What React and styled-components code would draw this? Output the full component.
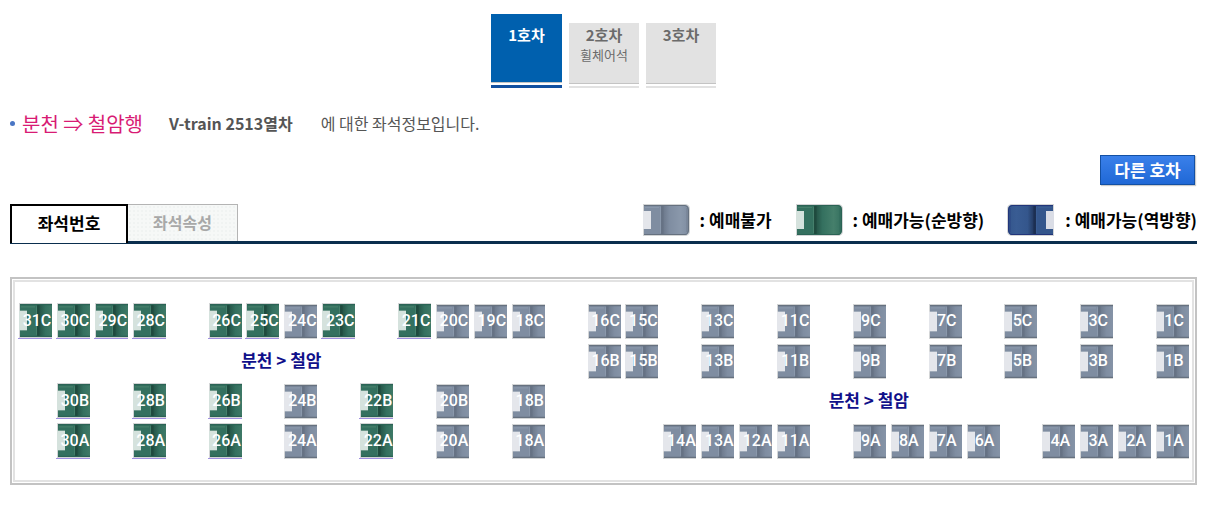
import React, { useState } from 'react';
import styled, { createGlobalStyle } from 'styled-components';

const cars = [
  { id: 1, name: '1호차' },
  { id: 2, name: '2호차', note: '휠체어석' },
  { id: 3, name: '3호차' },
];

const LAST = 31;

const seatRows = [
  { row: 1, letter: 'C', open: [31, 30, 29, 28, 26, 25, 23, 21], closed: [24, 20, 19, 18, 16, 15, 13, 11, 9, 7, 5, 3, 1] },
  { row: 2, letter: 'B', open: [], closed: [16, 15, 13, 11, 9, 7, 5, 3, 1] },
  { row: 3, letter: 'B', open: [30, 28, 26, 22], closed: [24, 20, 18] },
  { row: 4, letter: 'A', open: [30, 28, 26, 22], closed: [24, 20, 18, 14, 13, 12, 11, 9, 8, 7, 6, 4, 3, 2, 1] },
];

const tones = {
  gray: { body: '#7f8da1', light: '#8a98ab', dark: '#667284', edge: '#66717f', rest: '#e4e6eb' },
  green: { body: '#34705f', light: '#457f6b', dark: '#1f4a3e', edge: '#2b6355', rest: '#d5e2dd' },
  blue: { body: '#34568c', light: '#395c93', dark: '#1c2f52', edge: '#22357a', rest: '#dadde6' },
};

function SeatArt({ tone, height = 32, flip }) {
  const c = tones[tone];
  const id = `seat-${tone}-${height}`;
  return (
    <svg width="48" height={height} viewBox="0 0 48 32" preserveAspectRatio="none" aria-hidden="true">
      <defs>
        <linearGradient id={id}>
          <stop offset="0" stopColor={c.dark} />
          <stop offset="0.3" stopColor={c.body} />
          <stop offset="0.7" stopColor={c.light} />
          <stop offset="1" stopColor={c.body} />
        </linearGradient>
      </defs>
      <g transform={flip ? 'translate(48 0) scale(-1 1)' : undefined}>
        <path d="M1 0H44Q48 1 48 5V27Q48 31 44 32H1Z" fill="#d3d5d6" />
        <path d="M2 1H19V31H2Z" fill={c.body} />
        <path d="M19 1H43Q47 1 47 6V26Q47 31 43 31H19Z" fill={`url(#${id})`} />
        <path d="M2 1.500H43Q46.500 2 46.500 6V26Q46 30.500 43 30.500H2" fill="none" stroke={c.edge} />
        <path d="M3 3.500H17M18.500 3V29" fill="none" stroke={c.light} />
        <path d="M20.500 2V30" stroke={c.dark} strokeWidth="2" />
        <path d="M45 4V28" stroke={c.edge} opacity="0.5" />
        <path d="M1 7H9V25H1Z" fill={c.rest} />
      </g>
    </svg>
  );
}

function Seat({ number, row, letter, open }) {
  return (
    <SeatCell $col={LAST - number + 1} $row={row}>
      <SeatButton type="button" disabled={!open} $open={open}>
        <SeatArt tone={open ? 'green' : 'gray'} height={35} />
        <SeatNumber>{number}{letter}</SeatNumber>
      </SeatButton>
    </SeatCell>
  );
}

function App() {
  const [car, setCar] = useState(1);
  const [tab, setTab] = useState('number');

  return (
    <Page>
      <GlobalStyle />
      <CarTabs>
        {cars.map((c) => (
          <CarButton key={c.id} type="button" $active={car === c.id} onClick={() => setCar(c.id)}>
            <CarBody $active={car === c.id}>
              <CarName>{c.name}</CarName>
              {c.note && <CarNote>{c.note}</CarNote>}
            </CarBody>
          </CarButton>
        ))}
      </CarTabs>

      <Summary>
        <Route>분천 ⇒ 철암행</Route>
        <Train>V-train 2513열차</Train>
        <span>에 대한 좌석정보입니다.</span>
      </Summary>

      <Actions>
        <OtherCar type="button">다른 호차</OtherCar>
      </Actions>

      <Bar>
        <Tabs>
          <Tab type="button" $active={tab === 'number'} onClick={() => setTab('number')}>좌석번호</Tab>
          <Tab type="button" $active={tab === 'kind'} onClick={() => setTab('kind')}>좌석속성</Tab>
        </Tabs>
        <Legend>
          <LegendItem><SeatArt tone="gray" />: 예매불가</LegendItem>
          <LegendItem><SeatArt tone="green" />: 예매가능(순방향)</LegendItem>
          <LegendItem><SeatArt tone="blue" flip />: 예매가능(역방향)</LegendItem>
        </Legend>
      </Bar>

      <Frame>
        <SeatMap>
          {seatRows.map(({ row, letter, open, closed }) => (
            <React.Fragment key={row}>
              {open.map((n) => <Seat key={n} number={n} row={row} letter={letter} open />)}
              {closed.map((n) => <Seat key={n} number={n} row={row} letter={letter} open={false} />)}
            </React.Fragment>
          ))}
          <Direction $row={2} $from={1} $to={15}>분천 &gt; 철암</Direction>
          <Direction $row={3} $from={15} $to={32}>분천 &gt; 철암</Direction>
        </SeatMap>
      </Frame>
    </Page>
  );
}

export default App;

const GlobalStyle = createGlobalStyle`
* {
  box-sizing: border-box;
}
body {
  margin: 0;
  background: white;
  color: #555555;
  font-family: "Noto Sans CJK KR", sans-serif;
  font-size: 16px;
}
button {
  margin: 0;
  padding: 0;
  border: 0;
  font: inherit;
  cursor: pointer;
}
`

const Page = styled.div`
padding: 14px 11px 24px 10px;
`

const CarTabs = styled.div`
display: flex;
justify-content: center;
align-items: flex-end;
gap: 7px;
`

const CarButton = styled.button`
display: flex;
width: ${({ $active }) => ($active ? '71px' : '70px')};
height: ${({ $active }) => ($active ? '74px' : '65px')};
padding-bottom: 2px;
background: white;
border-bottom: ${({ $active }) => ($active ? '3px solid #1150a0' : '2px solid #e2e2e2')};
`

const CarBody = styled.span`
display: flex;
flex: 1;
flex-direction: column;
align-items: center;
align-self: stretch;
padding-top: ${({ $active }) => ($active ? '11px' : '2px')};
border-bottom: 1px solid #c4c4c4;
background: ${({ $active }) => ($active ? '#0060ae' : '#e2e2e2')};
color: ${({ $active }) => ($active ? 'white' : '#6b6b6b')};
`

const CarName = styled.strong`
font-size: 15px;
line-height: 20px;
`

const CarNote = styled.span`
font-size: 13px;
line-height: 19px;
`

const Summary = styled.div`
display: flex;
align-items: center;
height: 40px;
margin-top: 15px;
&::before {
  content: '';
  width: 5px;
  height: 5px;
  margin-right: 7px;
  border-radius: 50%;
  background: #4a76c4;
}
`

const Route = styled.span`
margin-right: 26px;
color: #d81b74;
font-size: 20px;
`

const Train = styled.strong`
margin-right: 28px;
`

const Actions = styled.div`
display: flex;
justify-content: flex-end;
margin-top: 12px;
padding-right: 2px;
`

const OtherCar = styled.button`
width: 95px;
height: 30px;
border: 1px solid #1350a4;
background: linear-gradient(#3a80ea, #2068d6);
box-shadow: 1px 1px 1px #cccccc;
color: white;
font-size: 17px;
font-weight: 700;
line-height: 26px;
`

const Bar = styled.div`
display: flex;
justify-content: space-between;
align-items: flex-start;
height: 40px;
margin-top: 19px;
border-bottom: 3px solid #0a2e4e;
`

const Tabs = styled.div`
display: flex;
align-items: flex-start;
`

const Tab = styled.button`
width: ${({ $active }) => ($active ? '118px' : '110px')};
height: ${({ $active }) => ($active ? '39px' : '37px')};
padding-bottom: 3px;
border: ${({ $active }) => ($active ? '2px solid black' : '1px solid #b4b4b4')};
border-bottom: 0;
border-left-width: ${({ $active }) => ($active ? '2px' : '0')};
background: ${({ $active }) => ($active ? 'white' : 'radial-gradient(#f0f3f2 1px, #f6f8f7 1px) 0 0 / 4px 4px')};
color: ${({ $active }) => ($active ? 'black' : '#a8a8a8')};
font-size: ${({ $active }) => ($active ? '17px' : '16px')};
font-weight: 700;
line-height: 32px;
`

const Legend = styled.div`
display: flex;
gap: 23px;
color: black;
font-size: 17px;
font-weight: 700;
`

const LegendItem = styled.span`
display: flex;
align-items: center;
gap: 10px;
height: 32px;
line-height: 20px;
white-space: nowrap;
`

const Frame = styled.div`
margin-top: 33px;
padding: 1px;
border: 2px solid #c3c3c3;
`

const SeatMap = styled.div`
display: grid;
grid-template-columns: repeat(31, minmax(0, 1fr));
grid-auto-rows: 40px;
padding: 19px 1px;
border: 2px solid #e2e2e2;
`

const SeatCell = styled.div`
grid-column: ${({ $col }) => $col};
grid-row: ${({ $row }) => $row};
padding: 2px 0 0 2px;
`

const SeatButton = styled.button`
display: block;
position: relative;
width: 34px;
height: 36px;
padding-top: ${({ $open }) => ($open ? '0' : '1px')};
border-bottom: ${({ $open }) => ($open ? '1px solid #a08fe0' : '0')};
background: white;
overflow: hidden;
cursor: ${({ $open }) => ($open ? 'pointer' : 'default')};
svg {
  display: block;
}
`

const SeatNumber = styled.span`
position: absolute;
inset: 0 0 0 4px;
display: flex;
justify-content: center;
color: white;
font-family: Roboto, sans-serif;
font-weight: 500;
line-height: 36px;
`

const Direction = styled.div`
grid-row: ${({ $row }) => $row};
grid-column: ${({ $from, $to }) => `${$from} / ${$to}`};
color: #10108a;
font-size: 17px;
font-weight: 700;
line-height: 37px;
text-align: center;
pointer-events: none;
`
